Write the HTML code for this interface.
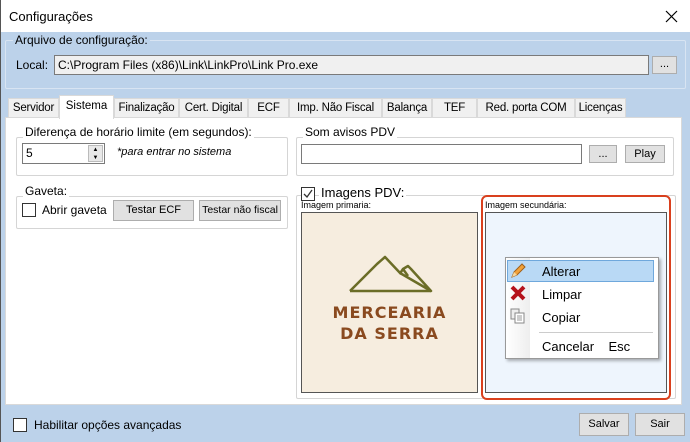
<!DOCTYPE html>
<html><head><meta charset="utf-8"><style>
*{box-sizing:border-box;margin:0;padding:0}
body{width:690px;height:442px;overflow:hidden;font-family:"Liberation Sans",sans-serif;font-size:12px;color:#000;background:#bcd2ea;position:relative}
.a{position:absolute}
.grp{position:absolute;border:1px solid #d5d5d5;border-radius:2px}
.lbl{position:absolute;background:#fff;padding:0 2px;white-space:nowrap}
.btn{position:absolute;background:#e1e1e1;border:1px solid #adadad;font-size:11px;text-align:center}
.tb{position:absolute;background:#fff;border:1px solid #7a7a7a}
.cb{position:absolute;width:14px;height:14px;border:1px solid #333;background:#fff}
.tab{position:absolute;top:98px;height:19px;background:#f0f0f0;border:1px solid #d9d9d9;border-bottom:none;text-align:center;line-height:18px;white-space:nowrap;font-size:11.5px;letter-spacing:-0.2px}
</style></head><body>
<div class="a" style="left:0;top:0;width:690px;height:32px;background:#fff"></div>
<div class="a" style="left:0;top:0;width:1px;height:442px;background:#555"></div>
<div class="a" style="left:9px;top:9px;font-size:13px">Configurações</div>
<svg class="a" style="left:665px;top:10px" width="13" height="13"><path d="M1 1L12 12M12 1L1 12" stroke="#000" stroke-width="1.2"/></svg>
<div class="a" style="left:5px;top:40px;width:681px;height:49px;border:1px solid #d8e4f2;border-radius:2px"></div>
<div class="a" style="left:13px;top:33px;background:#bcd2ea;padding:0 2px">Arquivo de configuração:</div>
<div class="a" style="left:16px;top:58px">Local:</div>
<div class="a" style="left:54px;top:55px;width:595px;height:20px;background:#f0f0f0;border:1px solid #7a7a7a;padding:2px 3px">C:\Program Files (x86)\Link\LinkPro\Link Pro.exe</div>
<div class="btn" style="left:652px;top:56px;width:25px;height:18px;line-height:14px">...</div>
<div class="tab" style="left:8px;width:51px">Servidor</div>
<div class="tab" style="left:114px;width:65px">Finalização</div>
<div class="tab" style="left:179px;width:69px">Cert. Digital</div>
<div class="tab" style="left:248px;width:41px">ECF</div>
<div class="tab" style="left:289px;width:93px">Imp. Não Fiscal</div>
<div class="tab" style="left:382px;width:50px">Balança</div>
<div class="tab" style="left:432px;width:45px">TEF</div>
<div class="tab" style="left:477px;width:98px">Red. porta COM</div>
<div class="tab" style="left:575px;width:51px">Licenças</div>
<div class="a" style="left:5px;top:117px;width:677px;height:288px;background:#fff;border:1px solid #d9d9d9"></div>
<div class="a" style="left:59px;top:95px;width:55px;height:24px;background:#fff;border:1px solid #d9d9d9;border-bottom:none;text-align:center;line-height:20px;font-size:11.5px">Sistema</div>
<div class="grp" style="left:16px;top:137px;width:272px;height:39px"></div>
<div class="lbl" style="left:23px;top:125px">Diferença de horário limite (em segundos):</div>
<div class="tb" style="left:22px;top:143px;width:83px;height:21px;padding:2px 3px">5</div>
<div class="a" style="left:88px;top:145px;width:15px;height:17px;background:#e8e8e8;border:1px solid #bbb;font-size:6px;line-height:8px;text-align:center">▲<br>▼</div>
<div class="a" style="left:117px;top:146px;font-style:italic;font-size:11px">*para entrar no sistema</div>
<div class="grp" style="left:16px;top:196px;width:272px;height:33px"></div>
<div class="lbl" style="left:23px;top:184px">Gaveta:</div>
<div class="cb" style="left:22px;top:203px"></div>
<div class="a" style="left:42px;top:203px">Abrir gaveta</div>
<div class="btn" style="left:113px;top:200px;width:81px;height:21px;line-height:19px">Testar ECF</div>
<div class="btn" style="left:199px;top:200px;width:82px;height:21px;line-height:19px;font-size:10.5px">Testar não fiscal</div>
<div class="grp" style="left:296px;top:137px;width:378px;height:39px"></div>
<div class="lbl" style="left:303px;top:125px">Som avisos PDV</div>
<div class="tb" style="left:301px;top:144px;width:281px;height:20px"></div>
<div class="btn" style="left:589px;top:145px;width:28px;height:18px;line-height:16px">...</div>
<div class="btn" style="left:625px;top:145px;width:40px;height:18px;line-height:16px">Play</div>
<div class="grp" style="left:296px;top:195px;width:380px;height:204px"></div>
<div class="cb" style="left:301px;top:187px"></div>
<svg class="a" style="left:302px;top:188px" width="12" height="12"><path d="M2 6L5 9L10 2" stroke="#333" fill="none" stroke-width="1.3"/></svg>
<div class="lbl" style="left:319px;top:185px;font-size:13px">Imagens PDV:</div>
<div class="a" style="left:301px;top:200px;font-size:9px">Imagem primaria:</div>
<div class="a" style="left:301px;top:212px;width:177px;height:181px;background:#f6eddf;border:1px solid #555"></div>
<svg class="a" style="left:345px;top:252px" width="92" height="44"><path d="M5 39L32 12L40 5L56 22M55 21L56 20L58 17L63 14L66 17L86 39Z" stroke="#6b6d27" stroke-width="2.5" fill="none" stroke-linejoin="round"/><path d="M58 17L63 24" stroke="#6b6d27" stroke-width="2.5"/><path d="M5 39H86" stroke="#6b6d27" stroke-width="2.5"/></svg>
<div class="a" style="left:301px;top:302px;width:177px;text-align:center;font-family:'DejaVu Sans',sans-serif;font-weight:bold;font-size:16px;line-height:21px;color:#8a4a1f;letter-spacing:1px">MERCEARIA<br>DA SERRA</div>
<div class="a" style="left:481px;top:195px;width:190px;height:205px;border:2px solid #d9401e;border-radius:6px"></div>
<div class="a" style="left:485px;top:200px;font-size:9px">Imagem secundária:</div>
<div class="a" style="left:485px;top:212px;width:182px;height:181px;background:#eef5fd;border:1px solid #555"></div>
<div class="a" style="left:505px;top:257px;width:154px;height:102px;background:#fff;border:1px solid #999;box-shadow:2px 2px 3px rgba(0,0,0,.3)"></div>
<div class="a" style="left:506px;top:258px;width:24px;height:100px;background:linear-gradient(90deg,#fff,#eee)"></div>
<div class="a" style="left:507px;top:260px;width:147px;height:22px;background:#b9d9f5;border:1px solid #6fa8dc"></div>
<svg class="a" style="left:509px;top:262px" width="18" height="18"><path d="M3 15L5 10L13 2L16 5L8 13Z" fill="#f2a23a" stroke="#a0601a"/><path d="M3 15L5 10L8 13Z" fill="#f5d8a0"/></svg>
<svg class="a" style="left:510px;top:285px" width="16" height="16"><path d="M2 2L14 14M14 2L2 14" stroke="#b5121b" stroke-width="4"/></svg>
<svg class="a" style="left:510px;top:308px" width="16" height="16"><rect x="1" y="1" width="8" height="10" fill="#eee" stroke="#888"/><rect x="5" y="5" width="9" height="10" fill="#fff" stroke="#888"/><path d="M7 8H12M7 10H12M7 12H12" stroke="#999"/></svg>
<div class="a" style="left:542px;top:264px;font-size:13px">Alterar</div>
<div class="a" style="left:542px;top:287px;font-size:13px">Limpar</div>
<div class="a" style="left:542px;top:310px;font-size:13px">Copiar</div>
<div class="a" style="left:539px;top:332px;width:114px;height:1px;background:#ccc"></div>
<div class="a" style="left:542px;top:339px;font-size:13px">Cancelar&nbsp;&nbsp;&nbsp;&nbsp;Esc</div>
<div class="cb" style="left:13px;top:418px"></div>
<div class="a" style="left:34px;top:418px">Habilitar opções avançadas</div>
<div class="btn" style="left:579px;top:413px;width:50px;height:23px;line-height:21px">Salvar</div>
<div class="btn" style="left:635px;top:413px;width:50px;height:23px;line-height:21px">Sair</div>
</body></html>
